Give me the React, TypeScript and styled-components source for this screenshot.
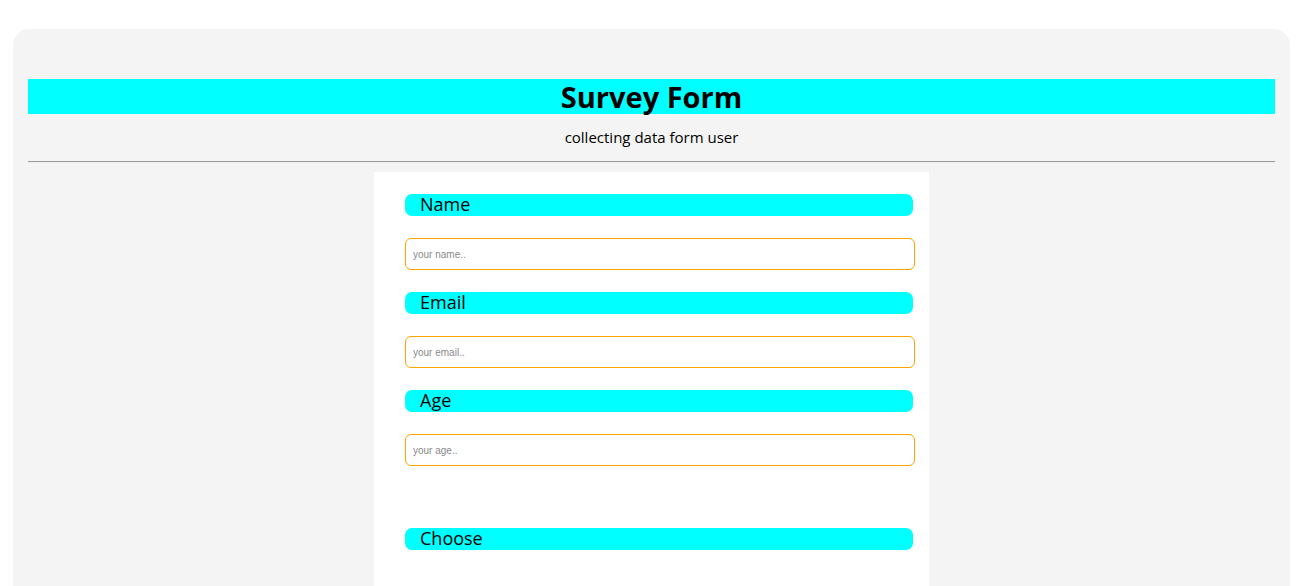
import styled, { createGlobalStyle } from 'styled-components';

const GlobalStyle = createGlobalStyle`
  body {
    margin: 0;
    background-color: #ffffff;
    font-family: "Open Sans", "Noto Sans", sans-serif;
    color: #000000;
  }
`;

const fields = [
  { id: 'name', label: 'Name', placeholder: 'your name..' },
  { id: 'email', label: 'Email', placeholder: 'your email..' },
  { id: 'age', label: 'Age', placeholder: 'your age..' },
];

export default function App() {
  return (
    <>
      <GlobalStyle />
      <Page>
        <Card>
          <Title>Survey Form</Title>
          <Subtitle>collecting data form user</Subtitle>
          <Divider />
          <FormPanel>
            {fields.map((field) => (
              <Field key={field.id}>
                <Label htmlFor={field.id}>{field.label}</Label>
                <Input id={field.id} placeholder={field.placeholder} />
              </Field>
            ))}
            <Spacer />
            <Label as="div">Choose</Label>
          </FormPanel>
        </Card>
      </Page>
    </>
  );
}

const Page = styled.main`
  padding: 29px 16px 0 13px;
`;

const Card = styled.section`
  background-color: #f4f4f4;
  border-radius: 16px;
  padding: 50px 15px 40px;
`;

const Title = styled.h1`
  margin: 0;
  height: 35px;
  line-height: 35px;
  background-color: #00ffff;
  text-align: center;
  font-size: 29px;
  font-weight: 700;
`;

const Subtitle = styled.p`
  margin: 13px 0 14px;
  line-height: 20px;
  text-align: center;
  font-size: 15px;
`;

const Divider = styled.hr`
  margin: 0;
  border: none;
  border-top: 1px solid #9a9a9a;
  border-bottom: 1px solid #eeeeee;
`;

const FormPanel = styled.form`
  width: 555px;
  margin: 9px auto 0;
  padding: 22px 14px 40px 31px;
  box-sizing: border-box;
  background-color: #ffffff;
  display: flex;
  flex-direction: column;
`;

const Field = styled.div`
  display: flex;
  flex-direction: column;
  gap: 22px;
  margin-bottom: 22px;
`;

const Label = styled.label`
  display: block;
  width: 508px;
  height: 22px;
  box-sizing: border-box;
  padding-left: 15px;
  line-height: 20px;
  font-size: 18px;
  background-color: #00ffff;
  border-radius: 7px;
`;

const Input = styled.input`
  width: 510px;
  height: 32px;
  box-sizing: border-box;
  padding: 0 7px;
  border: 1px solid #ffa500;
  border-radius: 6px;
  font-family: "Liberation Sans", Arial, sans-serif;
  font-size: 10px;
  outline: none;

  &::placeholder {
    color: #8a8a8a;
  }
`;

const Spacer = styled.div`
  height: 40px;
`;
